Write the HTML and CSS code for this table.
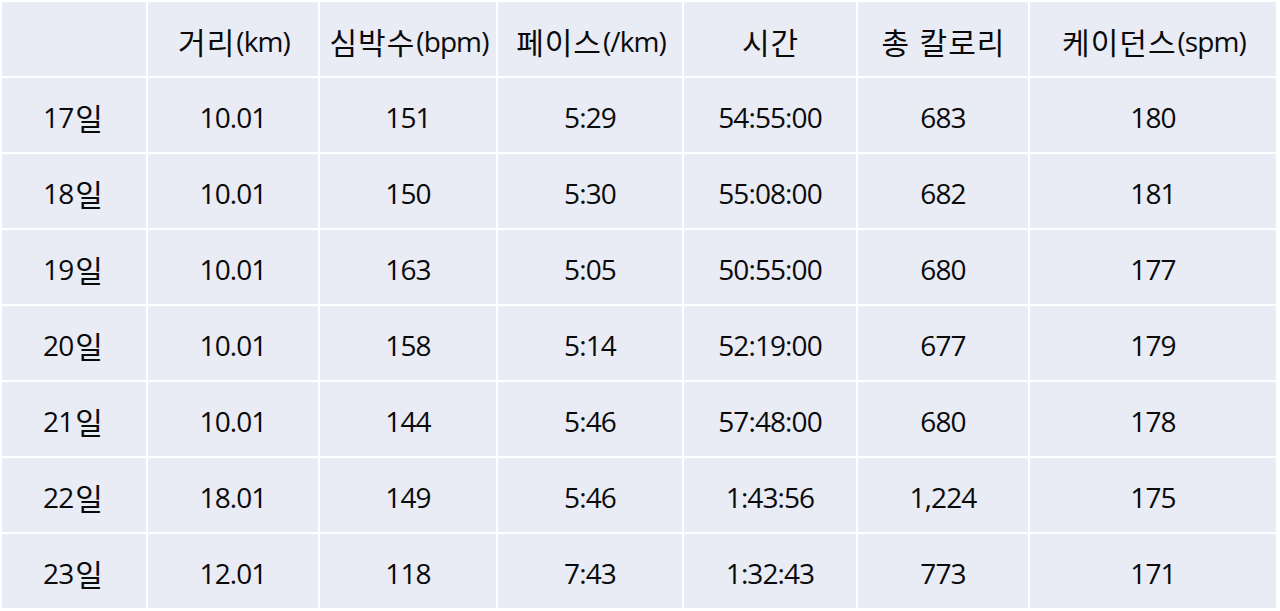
FILE: index.html
```html
<!DOCTYPE html>
<html lang="ko">
<head>
<meta charset="utf-8">
<link rel="stylesheet" href="styles.css">
</head>
<body>
<div class="table">
  <div class="cell"></div><div class="cell"><span class="ko">거리</span>(km)</div><div class="cell"><span class="ko">심박수</span>(bpm)</div><div class="cell"><span class="ko">페이스</span>(/km)</div><div class="cell"><span class="ko">시간</span></div><div class="cell"><span class="ko">총 칼로리</span></div><div class="cell"><span class="ko">케이던스</span>(spm)</div>
  <div class="cell">17<span class="ko">일</span></div><div class="cell">10.01</div><div class="cell">151</div><div class="cell">5:29</div><div class="cell">54:55:00</div><div class="cell">683</div><div class="cell">180</div>
  <div class="cell">18<span class="ko">일</span></div><div class="cell">10.01</div><div class="cell">150</div><div class="cell">5:30</div><div class="cell">55:08:00</div><div class="cell">682</div><div class="cell">181</div>
  <div class="cell">19<span class="ko">일</span></div><div class="cell">10.01</div><div class="cell">163</div><div class="cell">5:05</div><div class="cell">50:55:00</div><div class="cell">680</div><div class="cell">177</div>
  <div class="cell">20<span class="ko">일</span></div><div class="cell">10.01</div><div class="cell">158</div><div class="cell">5:14</div><div class="cell">52:19:00</div><div class="cell">677</div><div class="cell">179</div>
  <div class="cell">21<span class="ko">일</span></div><div class="cell">10.01</div><div class="cell">144</div><div class="cell">5:46</div><div class="cell">57:48:00</div><div class="cell">680</div><div class="cell">178</div>
  <div class="cell">22<span class="ko">일</span></div><div class="cell">18.01</div><div class="cell">149</div><div class="cell">5:46</div><div class="cell">1:43:56</div><div class="cell">1,224</div><div class="cell">175</div>
  <div class="cell">23<span class="ko">일</span></div><div class="cell">12.01</div><div class="cell">118</div><div class="cell">7:43</div><div class="cell">1:32:43</div><div class="cell">773</div><div class="cell">171</div>
</div>
</body>
</html>
```
FILE: styles.css
```css
html, body {
  margin: 0;
  padding: 0;
  background: #ffffff;
}
body {
  padding: 2px 0 0 2px;
  font-family: "Open Sans", "Noto Sans CJK KR", sans-serif;
}
.table {
  display: grid;
  grid-template-columns: 144px 170px 176px 184px 172px 170px 246px;
  grid-template-rows: repeat(8, 74px);
  gap: 2px;
  width: 1274px;
}
.cell {
  background: #e9ebf5;
  display: flex;
  align-items: center;
  justify-content: center;
  font-size: 28px;
  letter-spacing: -0.9px;
  color: #0a0a0a;
  padding-top: 3px;
  box-sizing: border-box;
  white-space: nowrap;
}
.ko {
  font-family: "Noto Sans CJK KR", sans-serif;
  font-size: 30px;
  letter-spacing: 1px;
  margin: 0 1px 0 2px;
}
```
